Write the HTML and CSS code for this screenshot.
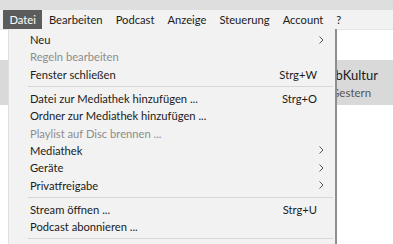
FILE: index.html
```html
<!DOCTYPE html>
<html lang="de">
<head>
<meta charset="utf-8">
<title>Datei-Menü</title>
<link rel="stylesheet" href="styles.css">
</head>
<body>
<div class="topstrip"></div>
<nav class="menubar">
  <span class="mb-item active">Datei</span>
  <span class="mb-item">Bearbeiten</span>
  <span class="mb-item">Podcast</span>
  <span class="mb-item">Anzeige</span>
  <span class="mb-item">Steuerung</span>
  <span class="mb-item">Account</span>
  <span class="mb-item">?</span>
</nav>
<main class="content">
  <div class="blank"></div>
  <div class="band">
    <div class="band-title">WebKultur</div>
    <div class="band-sub">Gestern</div>
  </div>
</main>
<div class="menu">
  <div class="item"><span class="label">Neu</span><span class="sub"><svg width="5" height="8" viewBox="0 0 5 8"><polyline points="0.5,0.5 4,4 0.5,7.5" fill="none" stroke="#555" stroke-width="1"/></svg></span></div>
  <div class="item disabled"><span class="label">Regeln bearbeiten</span></div>
  <div class="item"><span class="label">Fenster schließen</span><span class="key">Strg+W</span></div>
  <div class="sep"></div>
  <div class="item"><span class="label">Datei zur Mediathek hinzufügen ...</span><span class="key">Strg+O</span></div>
  <div class="item"><span class="label">Ordner zur Mediathek hinzufügen ...</span></div>
  <div class="item disabled"><span class="label">Playlist auf Disc brennen ...</span></div>
  <div class="item"><span class="label">Mediathek</span><span class="sub"><svg width="5" height="8" viewBox="0 0 5 8"><polyline points="0.5,0.5 4,4 0.5,7.5" fill="none" stroke="#555" stroke-width="1"/></svg></span></div>
  <div class="item"><span class="label">Geräte</span><span class="sub"><svg width="5" height="8" viewBox="0 0 5 8"><polyline points="0.5,0.5 4,4 0.5,7.5" fill="none" stroke="#555" stroke-width="1"/></svg></span></div>
  <div class="item"><span class="label">Privatfreigabe</span><span class="sub"><svg width="5" height="8" viewBox="0 0 5 8"><polyline points="0.5,0.5 4,4 0.5,7.5" fill="none" stroke="#555" stroke-width="1"/></svg></span></div>
  <div class="sep"></div>
  <div class="item"><span class="label">Stream öffnen ...</span><span class="key">Strg+U</span></div>
  <div class="item"><span class="label">Podcast abonnieren ...</span></div>
  <div class="sep"></div>
</div>
</body>
</html>
```
FILE: styles.css
```css
html, body {
  margin: 0;
  padding: 0;
}
body {
  width: 393px;
  height: 244px;
  overflow: hidden;
  position: relative;
  background: #ffffff;
  font-family: Lato, "Noto Sans", "DejaVu Sans", sans-serif;
  font-size: 11px;
  color: #1b1b1b;
}
.topstrip {
  height: 10px;
  background: #dedede;
}
.menubar {
  height: 19px;
  background: #f2f2f2;
  display: flex;
  align-items: stretch;
  padding-left: 3px;
  border-bottom: 1px solid #e6e6e6;
  font-size: 11.2px;
}
.mb-item {
  display: flex;
  align-items: center;
  padding: 0 6.5px;
  color: #1b1b1b;
}
.mb-item.active {
  background: #5c5c5c;
  color: #ffffff;
}
.content {
  display: flex;
  flex-direction: column;
}
.blank {
  height: 30px;
  background: #ffffff;
}
.band {
  height: 45px;
  background: #d9d9d9;
  display: flex;
  flex-direction: column;
  justify-content: center;
  gap: 3px;
}
.band-title {
  font-size: 13px;
  color: #1a1a1a;
  padding-left: 316px;
}
.band-sub {
  font-size: 11.5px;
  color: #555;
  padding-left: 331px;
}
.menu {
  position: absolute;
  left: 8px;
  top: 29px;
  width: 329px;
  height: 230px;
  background: #f2f2f2;
  border-left: 1px solid #e0e0e0;
  border-right: 2px solid #8e8e8e;
  padding-top: 2px;
  box-sizing: border-box;
  display: flex;
  flex-direction: column;
  font-size: 11.2px;
}
.item {
  height: 17.3px;
  display: flex;
  align-items: center;
  padding-left: 21px;
  padding-right: 18px;
}
.item .label {
  flex: 1;
}
.item.disabled {
  color: #8d8d8d;
}
.key {
  color: #1b1b1b;
}
.sub {
  display: flex;
  align-items: center;
  margin-right: -7px;
}
.sep {
  height: 7px;
  display: flex;
  align-items: center;
  margin-left: 19px;
  margin-right: 2px;
}
.sep::before {
  content: "";
  flex: 1;
  height: 1px;
  background: #d7d7d7;
}
```
